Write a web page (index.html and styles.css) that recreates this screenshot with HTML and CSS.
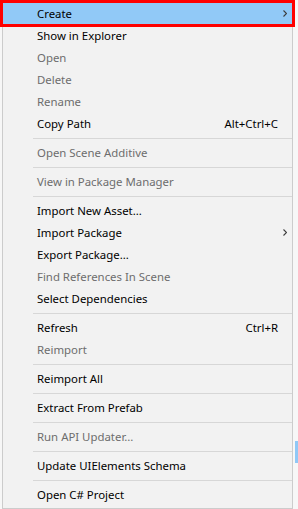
FILE: index.html
```html
<!DOCTYPE html>
<html>
<head>
<meta charset="utf-8">
<link rel="stylesheet" href="styles.css">
</head>
<body>
<div class="page">
  <div class="menu">
    <div class="item hl"><span class="label">Create</span><span class="sub"><svg width="4" height="7" viewBox="0 0 4 7"><path d="M0.5 0.5 L3.5 3.5 L0.5 6.5" fill="none" stroke="#3c3c3c" stroke-width="1.1"/></svg></span></div>
    <div class="item"><span class="label">Show in Explorer</span><span class="sub"></span></div>
    <div class="item off"><span class="label">Open</span><span class="sub"></span></div>
    <div class="item off"><span class="label">Delete</span><span class="sub"></span></div>
    <div class="item off"><span class="label">Rename</span><span class="sub"></span></div>
    <div class="item"><span class="label">Copy Path</span><span class="key">Alt+Ctrl+C</span><span class="sub"></span></div>
    <div class="sep"></div>
    <div class="item off"><span class="label">Open Scene Additive</span><span class="sub"></span></div>
    <div class="sep"></div>
    <div class="item off"><span class="label">View in Package Manager</span><span class="sub"></span></div>
    <div class="sep"></div>
    <div class="item"><span class="label">Import New Asset...</span><span class="sub"></span></div>
    <div class="item"><span class="label">Import Package</span><span class="sub"><svg width="4" height="7" viewBox="0 0 4 7"><path d="M0.5 0.5 L3.5 3.5 L0.5 6.5" fill="none" stroke="#3c3c3c" stroke-width="1.1"/></svg></span></div>
    <div class="item"><span class="label">Export Package...</span><span class="sub"></span></div>
    <div class="item off"><span class="label">Find References In Scene</span><span class="sub"></span></div>
    <div class="item"><span class="label">Select Dependencies</span><span class="sub"></span></div>
    <div class="sep"></div>
    <div class="item"><span class="label">Refresh</span><span class="key">Ctrl+R</span><span class="sub"></span></div>
    <div class="item off"><span class="label">Reimport</span><span class="sub"></span></div>
    <div class="sep"></div>
    <div class="item"><span class="label">Reimport All</span><span class="sub"></span></div>
    <div class="sep"></div>
    <div class="item"><span class="label">Extract From Prefab</span><span class="sub"></span></div>
    <div class="sep"></div>
    <div class="item off"><span class="label">Run API Updater...</span><span class="sub"></span></div>
    <div class="sep"></div>
    <div class="item"><span class="label">Update UIElements Schema</span><span class="sub"></span></div>
    <div class="sep"></div>
    <div class="item"><span class="label">Open C# Project</span><span class="sub"></span></div>
  </div>
  <div class="side"><div class="thumb"></div></div>
  <div class="mark"></div>
</div>
</body>
</html>
```
FILE: styles.css
```css
html, body {
  margin: 0;
  padding: 0;
  background: #f7f7f7;
}
.page {
  position: relative;
  display: flex;
  width: 298px;
  height: 509px;
  padding-left: 2px;
  box-sizing: border-box;
  font-family: "Noto Sans", "Open Sans", sans-serif;
  font-size: 11.4px;
}
.menu {
  width: 291px;
  box-sizing: border-box;
  background: #f2f2f2;
  border: 1px solid #cccccc;
  padding: 1px 0 2px 0;
  display: flex;
  flex-direction: column;
}
.item {
  display: flex;
  align-items: center;
  height: 22px;
  padding: 0 5px 0 34px;
  color: #000000;
  white-space: nowrap;
}
.item.off {
  color: #6d6d6d;
}
.item.hl {
  background: #91c9f7;
}
.label {
  flex: 1;
}
.sub {
  width: 9px;
  display: flex;
  justify-content: flex-end;
  align-items: center;
}
.sub svg {
  display: block;
}
.sep {
  height: 1px;
  background: #d7d7d7;
  margin: 4px 0 2px 30px;
}
.side {
  flex: 1;
  display: flex;
  flex-direction: column;
  align-items: flex-end;
  padding-top: 441px;
}
.thumb {
  width: 3px;
  height: 22px;
  background: #90c8f6;
}
.mark {
  position: absolute;
  left: 0;
  top: 0;
  width: 295px;
  height: 27px;
  box-sizing: border-box;
  border: 3px solid #ff0000;
}
```
